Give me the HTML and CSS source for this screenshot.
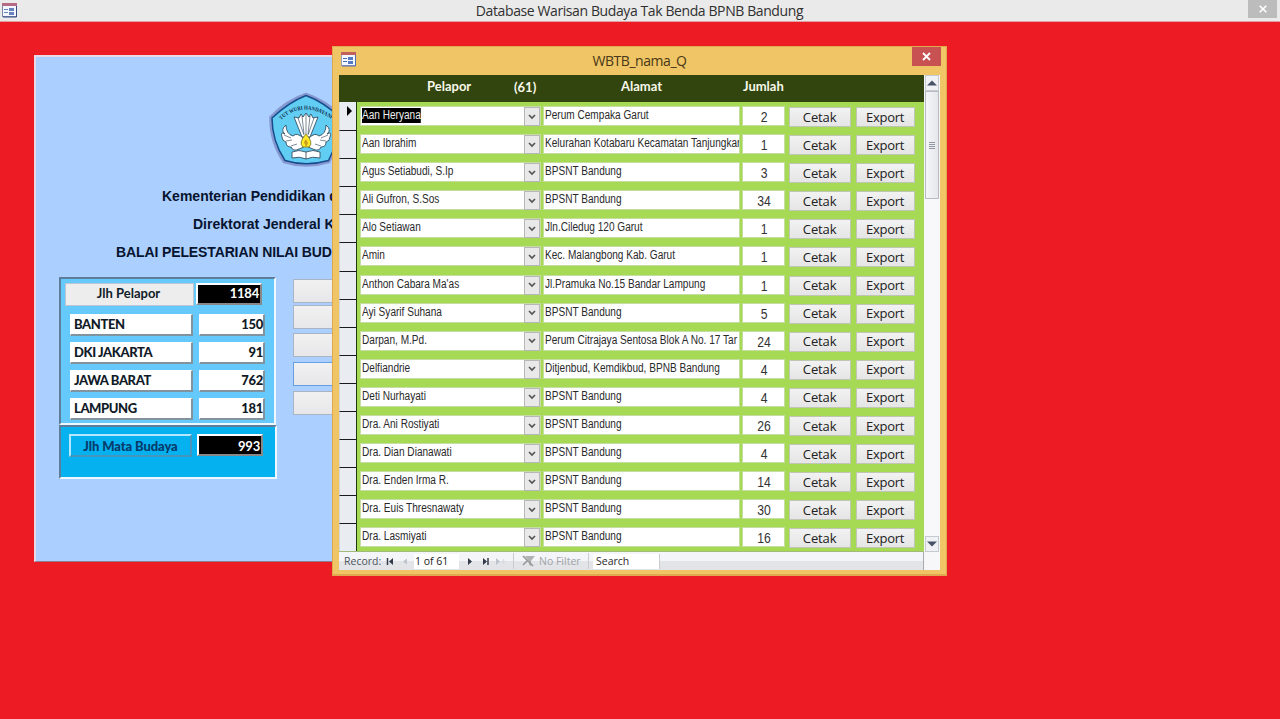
FILE: index.html
```html
<!DOCTYPE html>
<html lang="id">
<head>
<meta charset="utf-8">
<title>Database Warisan Budaya Tak Benda BPNB Bandung</title>
<link rel="stylesheet" href="styles.css">
</head>
<body>
<div class="app">
  <header class="titlebar">
    <svg class="form-icon" width="16" height="15" viewBox="0 0 16 15"><rect x=".5" y=".5" width="14" height="13" fill="#f4f7fd" stroke="#7b86ad"/><path d="M0 0h15v3H0z" fill="#b66b85"/><path d="M14.5 3v11H1" fill="none" stroke="#384f85"/><path d="M2 6.5h4M2 9.5h4" stroke="#6b85bb"/><path d="M7 5h5v3H7zM7 9h5v3H7z" fill="#6683bd"/></svg>
    <h1 class="app-title">Database Warisan Budaya Tak Benda BPNB Bandung</h1>
    <button class="app-close"><svg width="8" height="8" viewBox="0 0 8 8"><path d="M.7.7l6.6 6.6M7.3.7L.7 7.3" stroke="#fff" stroke-width="1.6"/></svg></button>
  </header>
  <main class="desktop">
    <section class="main-form">
      <svg class="logo" width="76" height="76" viewBox="0 0 76 76">
        <path d="M38 2Q57 8 74 25Q73 50 61 70Q38 77 16 70Q2 50 2.500 25Q19 8 38 2z" fill="#62cdf3" stroke="#8798d1" stroke-width="2.5"/>
        <path d="M38 3.500Q56 10 72.500 26Q71 49 60.500 68.500Q38 75 17 68.500Q4 49 4 26Q21 10 38 3.500z" fill="none" stroke="#174b8c" stroke-width="1.5"/>
        <path id="arc" d="M13 28Q38 6 67 30" fill="none"/>
        <text class="logo-text" textLength="55" lengthAdjust="spacingAndGlyphs"><textPath href="#arc">TUT WURI HANDAYANI</textPath></text>
        <g fill="#fff" stroke="#263d50" stroke-width=".8">
          <path d="M34 45L26 25L31 26L33 22L35 25L38 21L41 25L43 22L45 26L50 25L42 45z"/>
          <path d="M30 26l6 17M34 24l2 18M38 22v20M42 24l-2 18M46 26l-6 17" stroke-width=".6"/>
          <path d="M18 33Q12 38 17 42Q12 39 14 45Q14 49 18 50Q18 55 23 55Q25 60 31 57L36 55L35 46Q29 40 25 44Q18 42 18 33z"/>
          <path d="M58 33Q64 38 59 42Q64 39 62 45Q62 49 58 50Q58 55 53 55Q51 60 45 57L40 55L41 46Q47 40 51 44Q58 42 58 33z"/>
          <path d="M16 43l7 3M18 49l6-1M23 54l6-2M60 43l-7 3M58 49l-6-1M53 54l-6-2" stroke-width=".6"/>
          <path d="M24 60q7-3 14 0q7-3 14 0v6q-8-2-14 1q-6-3-14-1zM38 60v7"/>
        </g>
        <path d="M38 42q-8 9-3 13h6q5-4-3-13z" fill="#ffe928" stroke="#8a8c26"/><path d="M36 50l2-3 2 4-2 4z" fill="#c99d1e"/>
      </svg>
      <div class="headings">
        <p class="heading h-a">Kementerian Pendidikan d</p>
        <p class="heading h-b">Direktorat Jenderal K</p>
        <p class="heading h-c">BALAI PELESTARIAN NILAI BUDA</p>
      </div>
      <div class="lower">
        <div class="stats">
          <div class="panel">
            <div class="stat total"><button class="total-label"><span>Jlh Pelapor</span></button><output class="black"><span>1184</span></output></div>
            <div class="stat"><b class="label">BANTEN</b><b class="value">150</b></div>
            <div class="stat"><b class="label">DKI JAKARTA</b><b class="value">91</b></div>
            <div class="stat"><b class="label">JAWA BARAT</b><b class="value">762</b></div>
            <div class="stat"><b class="label">LAMPUNG</b><b class="value">181</b></div>
          </div>
          <div class="panel budaya"><b class="budaya-label">Jlh Mata Budaya</b><output class="black">993</output></div>
        </div>
        <div class="menu"><button></button><button></button><button></button><button class="focused"></button><button></button></div>
      </div>
    </section>
  </main>
  <section class="window">
    <header class="window-bar">
      <svg class="form-icon" width="16" height="15" viewBox="0 0 16 15"><rect x=".5" y=".5" width="14" height="13" fill="#f4f7fd" stroke="#9aa1bd"/><path d="M0 0h15v3H0z" fill="#c0605f"/><path d="M14.5 3v11H1" fill="none" stroke="#526db0"/><path d="M2 6.5h4M2 9.5h4" stroke="#4b6cb9"/><path d="M7 5h5v3H7zM7 9h5v3H7z" fill="#567bc6"/></svg>
      <h2 class="window-title">WBTB_nama_Q</h2>
      <button class="window-close"><svg width="9" height="9" viewBox="0 0 9 9"><path d="M1 1l7 7M8 1L1 8" stroke="#fff" stroke-width="1.8"/></svg></button>
    </header>
    <div class="window-body">
      <div class="list-area">
        <div class="columns"><span class="c-pelapor">Pelapor</span><span class="c-count">(61)</span><span class="c-alamat">Alamat</span><span class="c-jumlah">Jumlah</span></div>
        <div class="rows" id="rows"></div>
        <footer class="record-bar">
          <span class="rec-label">Record:</span>
          <svg class="nav-left" width="24" height="9" viewBox="0 0 24 9"><path d="M2.500 1v7" stroke="#333b4b" stroke-width="1.5"/><path d="M8 1v7L4 4.500z" fill="#333b4b"/><path d="M22 1.500v6l-4-3z" fill="#bec4cb"/></svg>
          <span class="rec-pos">1 of 61</span>
          <svg class="nav-right" width="42" height="9" viewBox="0 0 42 9"><path d="M0 1v7l4-3.500zM15 1v7l4-3.500z" fill="#333b4b"/><path d="M20 1v7" stroke="#333b4b" stroke-width="1.500"/><path d="M28 1v7l4-3.500z" fill="#bec4cb"/><path d="M33 4.500h5M35.500 2v5" stroke="#d7dade"/></svg>
          <span class="no-filter"><svg width="13" height="12" viewBox="0 0 13 12"><path d="M3 1h10L9 6v5L7 10V6z" fill="#b2b2b2"/><path d="M1 1l10 10M1 10l4-4" stroke="#999" stroke-width="1.700"/></svg><span>No Filter</span></span>
          <span class="search">Search</span>
        </footer>
      </div>
      <aside class="scrollbar"><div class="arrow"><svg width="10" height="6"><path d="M0 5.500h10L5 .5z" fill="#485268"/></svg></div><div class="thumb"><i></i><i></i><i></i><i></i></div><div class="track"></div><div class="arrow"><svg width="10" height="6"><path d="M0 .5h10L5 5.500z" fill="#485268"/></svg></div></aside>
    </div>
  </section>
</div>
<script src="rows.js"></script>
</body>
</html>
```

FILE: styles.css
```css
* { box-sizing: border-box; }
body { margin: 0; overflow: hidden; background: #ed1c24; }
button { padding: 0; margin: 0; font: inherit; color: inherit; border: 0; }
h1, h2, p { margin: 0; font-weight: 400; }
svg { flex: none; display: block; }
.app { position: relative; width: 1280px; height: 719px; overflow: hidden; background: #ed1c24; }
.titlebar { display: flex; align-items: flex-start; height: 22px; background: #eaeaea; border-bottom: 1px solid #e0a0a3; }
.titlebar .form-icon { margin: 3px 0 0 2px; }
.app-title { flex: 1; padding-left: 13px; text-align: center; font: 14px/22px "Open Sans", sans-serif; color: #303030; letter-spacing: -.4px; white-space: nowrap; }
.app-close { width: 29px; height: 18px; margin-right: 3px; display: grid; place-items: center; background: #bcbcbc; }
.desktop { padding: 33px 0 0 34px; }
.main-form { width: 620px; height: 507px; background: #abcffe; border: 2px solid #ead8e6; border-right: 0; border-bottom-color: #8c7b91; border-bottom-width: 1px; overflow: hidden; }
.logo { margin: 35px 0 0 232px; }
.logo-text { font: 700 5.6px "Liberation Serif", serif; fill: #102c4e; }
.headings { height: 108px; padding-top: 14px; }
.heading { height: 28px; font: 700 14px/28px "Liberation Sans", sans-serif; color: #07142f; white-space: nowrap; }
.h-a { padding-left: 126px; }
.h-b { padding-left: 157px; }
.h-c { padding-left: 80px; letter-spacing: -.12px; }
.lower { display: flex; gap: 16px; padding-left: 23px; }
.stats { width: 218px; padding-top: 1px; }
.panel { width: 217px; height: 148px; padding: 4px 7px 0 4px; background: #65cafb; border: 2px solid #f0f8ff; border-top-color: #5c7e9c; border-left-color: #5c7e9c; font: 700 13px/20px Lato, sans-serif; color: #111b28; }
.stat { display: flex; justify-content: space-between; height: 28px; padding: 2px 2px 0 5px; }
.stat.total { height: 29px; padding: 0; }
.total-label { width: 129px; height: 23px; line-height: 18px; background: #ededee; border: 1px solid #bac6d4; }
.total-label span { position: relative; top: -2px; left: -1px; }
.black { display: block; width: 66px; height: 22px; padding-right: 1px; text-align: right; color: #fff; background: #000; border: 2px solid #fff; border-right-color: #888; border-bottom-color: #888; line-height: 17px; letter-spacing: -.2px; }
.stat.total .black { margin-right: 5px; }
.label, .value { height: 22px; line-height: 19px; background: #fff; border: 1px solid #fff; border-right: 2px solid #80939e; border-bottom: 2px solid #80939e; }
.label { width: 123px; padding-left: 3px; letter-spacing: -.4px; }
.value { width: 66px; text-align: right; letter-spacing: -.3px; }
.panel.budaya { display: flex; gap: 5px; width: 218px; height: 54px; padding-top: 7px; padding-left: 8px; background: #05b2ef; }
.budaya-label { width: 123px; height: 23px; text-align: center; color: #063b6c; border: 2px solid #b5e7ff; border-right-color: #4695bd; border-bottom-color: #4695bd; line-height: 20px; letter-spacing: -.1px; }
.budaya .black { line-height: 20px; }
.menu { display: flex; flex-direction: column; gap: 4px; padding-top: 3px; }
.menu button { width: 180px; height: 24px; background: linear-gradient(#f1f1f2, #e7e7e9); border: 1px solid #aab4c4; }
.menu button:first-child { margin-bottom: -2px; }
.menu .focused { border-color: #64a0e6; margin: 1px 0; }
.window { position: absolute; left: 332px; top: 46px; width: 615px; height: 530px; background: #efc565; border: 1px solid #e0a94f; border-bottom-width: 2px; padding: 0 6px; }
.window-bar { display: flex; height: 28px; }
.window-bar .form-icon { margin: 5px 0 0 2px; }
.window-title { flex: 1; padding-left: 10px; font: 14px/27px "Open Sans", sans-serif; text-align: center; color: #493816; letter-spacing: -.45px; }
.window-close { width: 29px; height: 19px; display: grid; place-items: center; margin-right: -1px; background: #c85151; }
.window-body { display: flex; height: 495px; width: 601px; }
.list-area { display: flex; flex-direction: column; width: 585px; }
.columns { display: grid; grid-template-columns: 88px 87px 107px 122px 1fr; height: 27px; flex: none; background: #33450f; font: 700 13px/22px Lato, sans-serif; color: #f7f8e9; }
.c-pelapor { grid-column: 2; }
.c-count { line-height: 24px; }
.rows { flex: 1; overflow: hidden; background: #a7da54; border-bottom: 1px solid #a3bb79; }
.row { display: flex; height: 28.1px; padding-right: 9px; }
.selector { width: 18px; margin-right: 3px; background: #e9ecf0; border-right: 1px solid #1d3b0e; border-left: 1px solid #d2d5da; }
.row + .row .selector { border-top: 1px solid #1a1a1a; }
.selector svg { margin: 3px 0 0 7px; }
.combo, .address, .count, .action { margin-top: 4px; height: 20px; background: #fff; border: 1px solid #c5dda1; }
.combo { display: flex; width: 181px; margin-right: 2px; }
.name, .address { padding-left: 1px; overflow: hidden; font: 12px/17px "Liberation Sans", sans-serif; color: #2a2a2a; white-space: nowrap; }
.name { flex: 1; }
.narrow { display: inline-block; transform: scaleX(.84); transform-origin: left; }
.selected { background: #000; color: #eee; line-height: 15px; }
.drop { width: 16px; height: 19px; display: grid; place-items: center; background: #e9e9e9; border: 1px solid #b7b7b7; }
.address { width: 198px; margin-right: 2px; }
.count { width: 43px; margin-right: 4px; text-align: center; font: 14.500px/21px "Liberation Sans", sans-serif; color: #333; }
.count span { display: inline-block; transform: scaleX(.84); }
.action { margin-top: 5px; height: 20px; background: linear-gradient(#f2f2f2, #e5e5e5); border: 1px solid #bfc7b4; font: 13px/16px "Open Sans", sans-serif; color: #202020; padding: 0 1px 1px 0; }
.cetak { width: 62px; margin-right: 5px; letter-spacing: -.1px; }
.export { width: 59px; letter-spacing: -.25px; }
.record-bar { display: flex; align-items: center; flex: none; height: 18px; padding-left: 5px; background: linear-gradient(#f4f5f8 50%, #e2e4e8 50%); font: 10.500px/16px "Open Sans", sans-serif; color: #4e535c; white-space: nowrap; border-right: 1px solid #aaa; }
.rec-label { width: 41px; }
.nav-left { margin-right: 5px; }
.rec-pos { width: 45px; height: 15px; line-height: 15px; padding-left: 1px; background: #fff; color: #222; }
.nav-right { margin-left: 9px; width: 42px; }
.no-filter { display: flex; align-items: center; gap: 4px; width: 76px; margin-left: 3px; padding-left: 8px; color: #a1a3a8; border-left: 1px solid #ccc; border-right: 1px solid #ccc; }
.search { width: 67px; height: 15px; margin-left: 4px; padding-left: 3px; background: #fff; line-height: 15px; color: #292929; border-right: 1px solid #ccc; }
.scrollbar { display: flex; flex-direction: column; width: 16px; height: 495px; padding: 0 1px 18px; background: #f7f7f9; }
.arrow { display: grid; place-items: center; height: 16px; flex: none; border: 1px solid #c5c9d0; background: #f0f1f4; }
.thumb { display: flex; flex-direction: column; justify-content: center; gap: 1px; height: 108px; padding: 0 3px; background: linear-gradient(90deg, #f5f5f7, #e5e7ec); border: 1px solid #b7bbc4; }
.thumb i { height: 1px; background: #9298a2; }
.track { flex: 1; background: #f8f8fa; }
```

FILE: rows.js
```js
const people = [
  ["Aan Heryana", "Perum Cempaka Garut", 2],
  ["Aan Ibrahim", "Kelurahan Kotabaru Kecamatan Tanjungkar", 1],
  ["Agus Setiabudi, S.Ip", "BPSNT Bandung", 3],
  ["Ali Gufron, S.Sos", "BPSNT Bandung", 34],
  ["Alo Setiawan", "Jln.Ciledug 120 Garut", 1],
  ["Amin", "Kec. Malangbong Kab. Garut", 1],
  ["Anthon Cabara Ma'as", "Jl.Pramuka No.15 Bandar Lampung", 1],
  ["Ayi Syarif Suhana", "BPSNT Bandung", 5],
  ["Darpan, M.Pd.", "Perum Citrajaya Sentosa Blok A No. 17 Tar", 24],
  ["Delfiandrie", "Ditjenbud, Kemdikbud, BPNB Bandung", 4],
  ["Deti Nurhayati", "BPSNT Bandung", 4],
  ["Dra. Ani Rostiyati", "BPSNT Bandung", 26],
  ["Dra. Dian Dianawati", "BPSNT Bandung", 4],
  ["Dra. Enden Irma R.", "BPSNT Bandung", 14],
  ["Dra. Euis Thresnawaty", "BPSNT Bandung", 30],
  ["Dra. Lasmiyati", "BPSNT Bandung", 16]
];

document.getElementById("rows").innerHTML = people.map(([name, address, count], i) => `
  <div class="row">
    <div class="selector">${i === 0 ? '<svg width="6" height="12"><path d="M0 1v10l5-5z" fill="#000"/></svg>' : ""}</div>
    <div class="combo">
      <div class="name"><span class="narrow${i === 0 ? " selected" : ""}">${name}</span></div>
      <div class="drop"><svg width="8" height="6"><path d="M1 1l3 3 3-3" fill="none" stroke="#555" stroke-width="1.7"/></svg></div>
    </div>
    <div class="address"><span class="narrow">${address}</span></div>
    <div class="count"><span>${count}</span></div>
    <button class="action cetak">Cetak</button>
    <button class="action export">Export</button>
  </div>`).join("");
```
